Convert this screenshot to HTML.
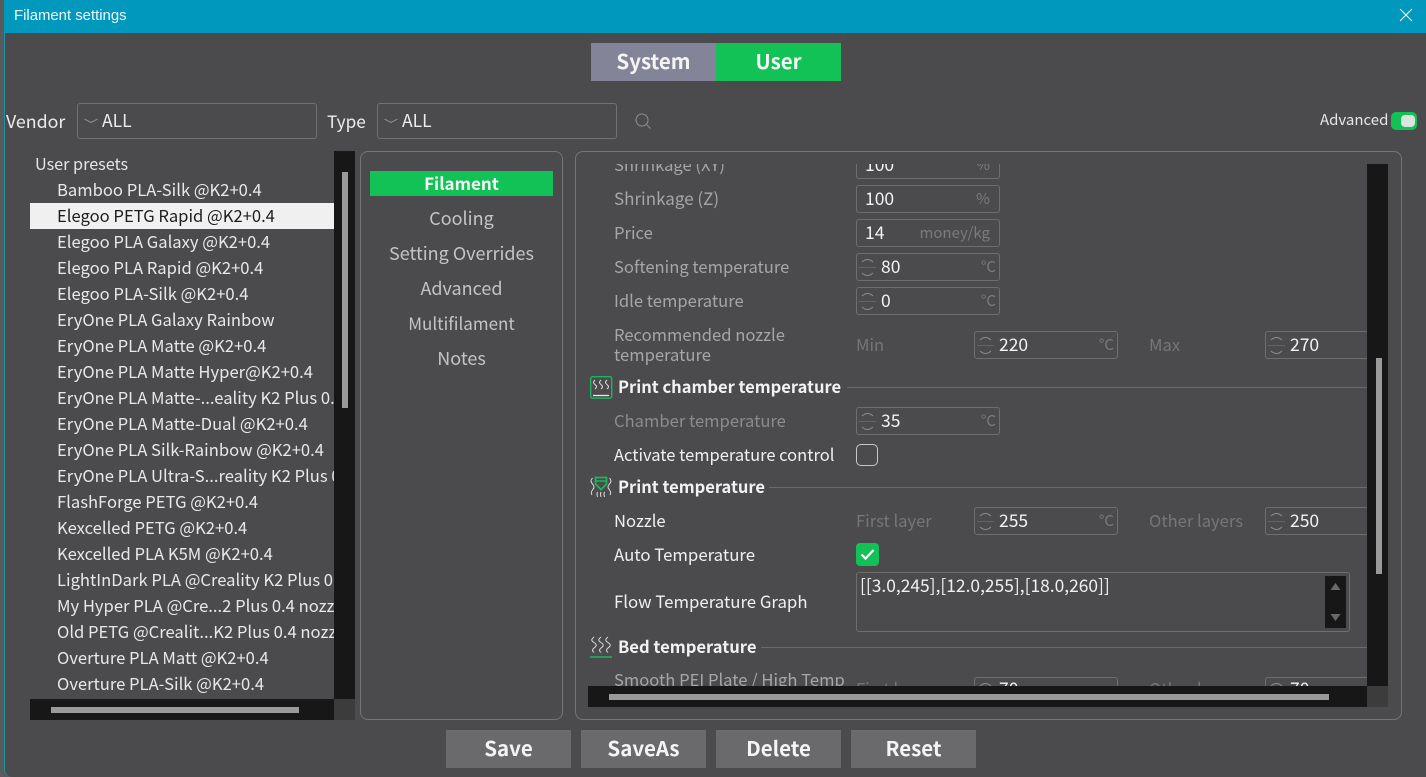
<!DOCTYPE html>
<html><head><meta charset="utf-8"><title>Filament settings</title>
<style>
html,body{margin:0;padding:0;width:1426px;height:777px;overflow:hidden;background:#585a5c}
#w{position:absolute;left:4px;top:0;width:1422px;height:777px;background:#4b4b4d;border-left:1px solid #1f8ea6;box-sizing:border-box;border-bottom-left-radius:8px;overflow:hidden}
#p{position:absolute;left:0;top:0;width:1426px;height:777px;overflow:hidden;font-family:"Noto Sans CJK SC","Liberation Sans",sans-serif;font-size:16.6px;color:#e6e6e6}
#p div,#p span.a{position:absolute;white-space:nowrap;box-sizing:border-box}
.t{height:26px;line-height:24px}
.l{color:#f0f0f0}.g{color:#a6a6a6}.d{color:#767676}.c{color:#8c8c8c}
.i{border:1px solid #6e6e6e;border-radius:3px;height:28px;width:144px;line-height:26px;color:#f2f2f2;padding-left:8px;font-size:17.5px}
.s{padding-left:24px}
.u{right:9px;top:0;color:#7b7b7b;font-size:15px}
.uc{right:3px;top:0;color:#7b7b7b;font-size:15px}
.b{font-weight:700;color:#f2f2f2;font-size:16.5px}
.r{height:1px;background:#6a6a6a}
.btn{top:730px;height:38px;width:125px;background:#6a6a6c;color:#f4f4f4;font-weight:700;font-size:20.5px;line-height:34px;text-align:center}
.li{left:57px;height:26px;line-height:24px;color:#e8e8e8;width:277px;overflow:hidden}
.m{left:370px;width:183px;text-align:center;color:#c4c4c4;font-size:18px;height:26px;line-height:24px}
svg{position:absolute;overflow:visible}
</style></head><body>
<div id="p">
<div id="w"></div>
<div style="left:4px;top:0;width:1422px;height:33px;background:#0098bd"></div>
<div class="t" style="left:14px;top:4px;color:#f2f8fa;font-size:14.9px;font-family:'Liberation Sans',sans-serif">Filament settings</div>
<svg style="left:1399px;top:8px" width="14" height="14"><path d="M1 1L13 13M13 1L1 13" stroke="#f0f8fa" stroke-width="1.1" fill="none"/></svg>

<div style="left:591px;top:43px;width:125px;height:38px;background:#848498;color:#f4f4f4;font-weight:700;font-size:20.5px;line-height:34px;text-align:center">System</div>
<div style="left:716px;top:43px;width:125px;height:38px;background:#12c257;color:#f4f4f4;font-weight:700;font-size:20.5px;line-height:34px;text-align:center">User</div>

<div class="t" style="left:6px;top:109px;font-size:17.8px;color:#ececec">Vendor</div>
<div style="left:77px;top:103px;width:240px;height:36px;border:1px solid #717171;border-radius:3px"></div>
<svg style="left:84px;top:118px" width="14" height="6"><path d="M0.500 1L7 4.500L13.500 1" stroke="#8a8a8a" fill="none"/></svg>
<div class="t" style="left:102px;top:109px;color:#ececec;font-size:17.5px">ALL</div>
<div class="t" style="left:327px;top:109px;font-size:17.2px;color:#ececec">Type</div>
<div style="left:377px;top:103px;width:240px;height:36px;border:1px solid #717171;border-radius:3px"></div>
<svg style="left:384px;top:118px" width="14" height="6"><path d="M0.500 1L7 4.500L13.500 1" stroke="#8a8a8a" fill="none"/></svg>
<div class="t" style="left:402px;top:109px;color:#ececec;font-size:17.5px">ALL</div>
<svg style="left:634px;top:112px" width="18" height="18"><circle cx="8" cy="8" r="6" stroke="#8f8f8f" fill="none"/><path d="M12.500 12.500L16.500 16.500" stroke="#8f8f8f"/></svg>
<div class="t" style="left:1320px;top:108px;font-size:15px;color:#e6e6e6">Advanced</div>
<div style="left:1391px;top:112px;width:26px;height:18px;background:#12c257;border-radius:5px"></div>
<div style="left:1401px;top:115px;width:14px;height:12px;background:#d8e6dd;border-radius:4px"></div>

<!-- list -->
<div class="t" style="left:35px;top:151px;color:#e6e6e6;font-size:16.2px">User presets</div>
<div style="left:30px;top:203px;width:304px;height:26px;background:#f0f0f0"></div>
<div class="li" style="top:177px">Bamboo PLA-Silk @K2+0.4</div>
<div class="li" style="top:203px;color:#1d1d1d">Elegoo PETG Rapid @K2+0.4</div>
<div class="li" style="top:229px">Elegoo PLA Galaxy @K2+0.4</div>
<div class="li" style="top:255px">Elegoo PLA Rapid @K2+0.4</div>
<div class="li" style="top:281px">Elegoo PLA-Silk @K2+0.4</div>
<div class="li" style="top:307px">EryOne PLA Galaxy Rainbow</div>
<div class="li" style="top:333px">EryOne PLA Matte @K2+0.4</div>
<div class="li" style="top:359px">EryOne PLA Matte Hyper@K2+0.4</div>
<div class="li" style="top:385px">EryOne PLA Matte-...eality K2 Plus 0.4 nozzle</div>
<div class="li" style="top:411px">EryOne PLA Matte-Dual @K2+0.4</div>
<div class="li" style="top:437px">EryOne PLA Silk-Rainbow @K2+0.4</div>
<div class="li" style="top:463px">EryOne PLA Ultra-S...reality K2 Plus 0.4 nozzle</div>
<div class="li" style="top:489px">FlashForge PETG @K2+0.4</div>
<div class="li" style="top:515px">Kexcelled PETG @K2+0.4</div>
<div class="li" style="top:541px">Kexcelled PLA K5M @K2+0.4</div>
<div class="li" style="top:567px">LightInDark PLA @Creality K2 Plus 0.4 nozzle</div>
<div class="li" style="top:593px">My Hyper PLA @Cre...2 Plus 0.4 nozzle</div>
<div class="li" style="top:619px">Old PETG @Crealit...K2 Plus 0.4 nozzle</div>
<div class="li" style="top:645px">Overture PLA Matt @K2+0.4</div>
<div class="li" style="top:671px">Overture PLA-Silk @K2+0.4</div>
<div style="left:334px;top:151px;width:21px;height:548px;background:#171717"></div>
<div style="left:342px;top:172px;width:6px;height:236px;background:#9a9a9a"></div>
<div style="left:30px;top:699px;width:304px;height:21px;background:#171717"></div>
<div style="left:334px;top:699px;width:21px;height:21px;background:#3c3c3c"></div>
<div style="left:51px;top:707px;width:248px;height:6px;background:#9a9a9a"></div>

<!-- middle -->
<div style="left:360px;top:151px;width:203px;height:569px;border:1px solid #757575;border-radius:8px"></div>
<div style="left:370px;top:171px;width:183px;height:25px;background:#12c257;color:#f6f6f6;font-weight:700;font-size:17px;line-height:23px;text-align:center">Filament</div>
<div class="m" style="top:206px">Cooling</div>
<div class="m" style="top:241px">Setting Overrides</div>
<div class="m" style="top:276px">Advanced</div>
<div class="m" style="top:311px;font-size:17px">Multifilament</div>
<div class="m" style="top:346px">Notes</div>

<!-- right -->
<div style="left:575px;top:151px;width:827px;height:569px;border:1px solid #757575;border-radius:8px"></div>
<div style="left:588px;top:164px;width:779px;height:522px;overflow:hidden">
 <div style="left:0;top:-164px;width:779px;height:722px">
  <div class="t g" style="left:26px;top:152px">Shrinkage (XY)</div>
  <div class="i" style="left:268px;top:151px">100<span class="a u">%</span></div>
  <div class="t g" style="left:26px;top:186px;font-size:17px">Shrinkage (Z)</div>
  <div class="i" style="left:268px;top:185px">100<span class="a u">%</span></div>
  <div class="t g" style="left:26px;top:220px">Price</div>
  <div class="i" style="left:268px;top:219px">14<span class="a u">money/kg</span></div>
  <div class="t g" style="left:26px;top:254px">Softening temperature</div>
  <div class="i s" style="left:268px;top:253px">80<span class="a uc">°C</span></div>
  <div class="t g" style="left:26px;top:288px">Idle temperature</div>
  <div class="i s" style="left:268px;top:287px">0<span class="a uc">°C</span></div>
  <div class="t g" style="left:26px;top:324px;height:20px;line-height:20px">Recommended nozzle</div>
  <div class="t g" style="left:26px;top:344px;height:20px;line-height:20px">temperature</div>
  <div class="t d" style="left:268px;top:332px">Min</div>
  <div class="i s" style="left:386px;top:331px">220<span class="a uc">°C</span></div>
  <div class="t d" style="left:561px;top:332px">Max</div>
  <div class="i s" style="left:677px;top:331px;width:144px">270</div>
  <div class="t b" style="left:30px;top:374px">Print chamber temperature</div>
  <div class="r" style="left:259px;top:387px;width:520px"></div>
  <div class="t c" style="left:26px;top:408px">Chamber temperature</div>
  <div class="i s" style="left:268px;top:407px">35<span class="a uc">°C</span></div>
  <div class="t l" style="left:26px;top:442px;font-size:16.5px">Activate temperature control</div>
  <div style="left:268px;top:444px;width:22px;height:22px;border:1px solid #c8c8c8;border-radius:5px"></div>
  <div class="t b" style="left:30px;top:474px">Print temperature</div>
  <div class="r" style="left:181px;top:487px;width:598px"></div>
  <div class="t l" style="left:26px;top:508px">Nozzle</div>
  <div class="t d" style="left:268px;top:508px">First layer</div>
  <div class="i s" style="left:386px;top:507px">255<span class="a uc">°C</span></div>
  <div class="t d" style="left:561px;top:508px">Other layers</div>
  <div class="i s" style="left:677px;top:507px;width:144px">250</div>
  <div class="t l" style="left:26px;top:542px;font-size:16.8px">Auto Temperature</div>
  <div style="left:268px;top:543px;width:23px;height:23px;background:#12c257;border-radius:4px"></div>
  <svg style="left:272px;top:548px" width="15" height="13"><path d="M1.500 6.500L5.500 10.500L13.500 2" stroke="#fff" stroke-width="2.200" fill="none"/></svg>
  <div class="t l" style="left:26px;top:589px;font-size:16.8px">Flow Temperature Graph</div>
  <div style="left:268px;top:572px;width:494px;height:60px;border:1px solid #6e6e6e;border-radius:3px"></div>
  <div class="t" style="left:272px;top:574px;color:#f0f0f0;font-size:17.4px">[[3.0,245],[12.0,255],[18.0,260]]</div>
  <div style="left:737px;top:576px;width:21px;height:52px;background:#171717"></div>
  <svg style="left:742px;top:583px" width="11" height="40"><path d="M5.500 0L10.500 7H0.500Z M0.500 31H10.500L5.500 38Z" fill="#6a6a6a"/></svg>
  <div class="t b" style="left:30px;top:634px;font-size:16.6px">Bed temperature</div>
  <div class="r" style="left:173px;top:647px;width:606px"></div>
  <div class="t g" style="left:26px;top:667px">Smooth PEI Plate / High Temp</div>
  <div class="t d" style="left:268px;top:676px">First layer</div>
  <div class="i s" style="left:386px;top:677px;line-height:22px">70</div>
  <div class="t d" style="left:561px;top:676px">Other layers</div>
  <div class="i s" style="left:677px;top:677px;width:144px;line-height:22px">70</div>
 </div>
</div>

<!-- spinner arrows -->
<svg style="left:0;top:0" width="1426" height="777" fill="none" stroke="#8c8c8c" stroke-width="1">
<path d="M862 262q5.500-5 11 0M862 273q5.500 5 11 0M862 296q5.500-5 11 0M862 307q5.500 5 11 0M980 340q5.500-5 11 0M980 351q5.500 5 11 0M1271 340q5.500-5 11 0M1271 351q5.500 5 11 0M862 416q5.500-5 11 0M862 427q5.500 5 11 0M980 516q5.500-5 11 0M980 527q5.500 5 11 0M1271 516q5.500-5 11 0M1271 527q5.500 5 11 0M980 686q5.500-5 11 0M1271 686q5.500-5 11 0"/>
<path stroke="#636363" d="M859 267.500H876M859 301.500H876M977 345.500H994M1268 345.500H1285M859 421.500H876M977 521.500H994M1268 521.500H1285"/>
</svg>

<!-- section icons -->
<svg style="left:590px;top:376px" width="22" height="23" fill="none">
<rect x="0.700" y="0.700" width="21" height="21.500" rx="2" stroke="#1fb45f" stroke-width="1.400"/>
<path d="M5 4c-2 2-2 3 0 4.500c2 1.500 2 3 0 4.500M11 4c-2 2-2 3 0 4.500c2 1.500 2 3 0 4.500M17 4c-2 2-2 3 0 4.500c2 1.500 2 3 0 4.500" stroke="#e4e4e4"/>
<path d="M3 19.500H19" stroke="#e8e8e8" stroke-width="1.300"/></svg>
<svg style="left:590px;top:476px" width="22" height="23" fill="none">
<path d="M2.500 2c-2 2.500-2 3.500 0 6c2 2.500 2 3.500 0 6c-1.500 2-1.500 3-.5 5M19.500 2c2 2.500 2 3.500 0 6c-2 2.500-2 3.500 0 6c1.500 2 1.500 3 .5 5M7.500 16c-1 2-.5 3 0 5M11 16c-1 2-.5 3 0 5M14.500 16c-1 2-.5 3 0 5" stroke="#dcdcdc"/>
<path d="M5.500 1.500H16.500V8L11 13.500L5.500 8Z" stroke="#1fb45f" stroke-width="1.800"/><path d="M5.500 5H16.500" stroke="#1fb45f" stroke-width="1.500"/></svg>
<svg style="left:590px;top:636px" width="22" height="22" fill="none">
<path d="M4 1c-3 2.500-3 3.500 0 5.500c3 2 3 3.500 0 5.500c-2 1.500-2 3 0 4.500M11 1c-3 2.500-3 3.500 0 5.500c3 2 3 3.500 0 5.500c-2 1.500-2 3 0 4.500M18 1c-3 2.500-3 3.500 0 5.500c3 2 3 3.500 0 5.500c-2 1.500-2 3 0 4.500" stroke="#dcdcdc"/>
<path d="M0 21H22" stroke="#1fb45f" stroke-width="1.600"/></svg>

<div style="left:1367px;top:164px;width:21px;height:522px;background:#171717"></div>
<div style="left:1376px;top:358px;width:6px;height:216px;background:#9a9a9a"></div>
<div style="left:588px;top:686px;width:779px;height:21px;background:#171717"></div>
<div style="left:1367px;top:686px;width:21px;height:21px;background:#3c3c3c"></div>
<div style="left:609px;top:694px;width:720px;height:6px;background:#9a9a9a"></div>

<div class="btn" style="left:446px">Save</div>
<div class="btn" style="left:581px">SaveAs</div>
<div class="btn" style="left:716px">Delete</div>
<div class="btn" style="left:851px">Reset</div>
</div>
</body></html>
